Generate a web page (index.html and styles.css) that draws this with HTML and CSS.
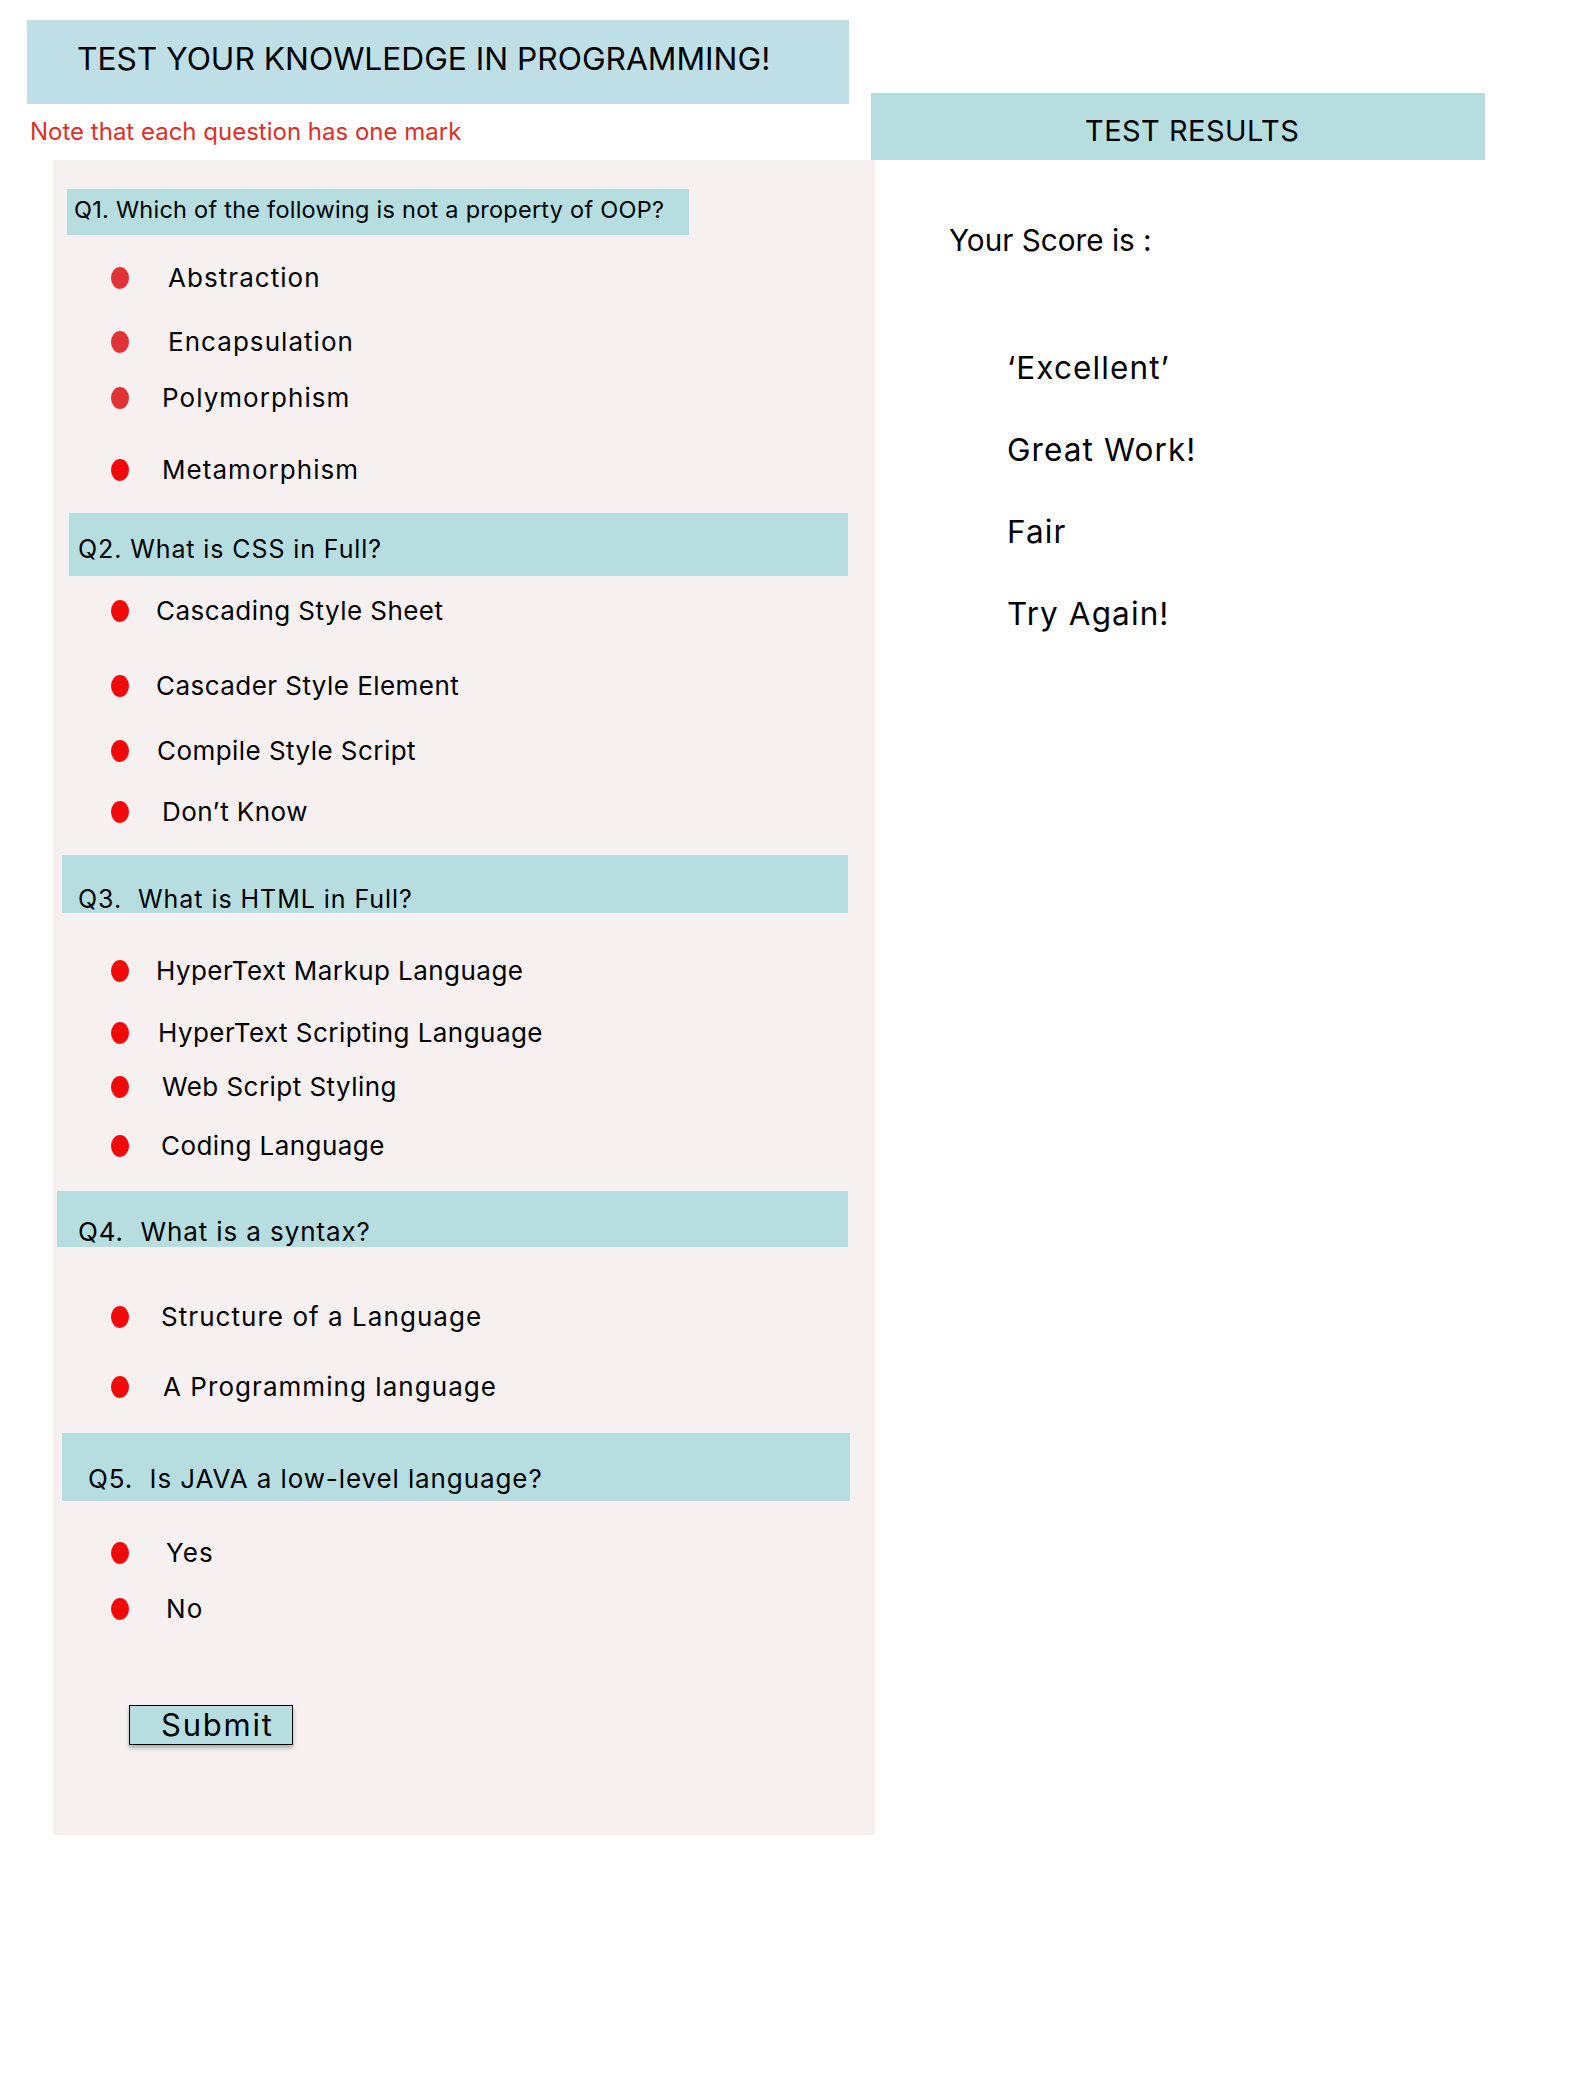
FILE: index.html
```html
<!DOCTYPE html>
<html lang="en">
<head>
<meta charset="utf-8">
<title>Programming Quiz</title>
<link rel="stylesheet" href="styles.css">
</head>
<body>
<div class="page">
  <div class="left">
    <h1 class="title">TEST YOUR KNOWLEDGE IN PROGRAMMING!</h1>
    <p class="note">Note that each question has one mark</p>
    <form class="panel">
      <div class="q q1">Q1. Which of the following is not a property of OOP?</div>
      <div class="opt wide r1"><span class="dot dot-soft"></span><span class="lbl g39">Abstraction</span></div>
      <div class="opt wide r2"><span class="dot dot-soft"></span><span class="lbl g39">Encapsulation</span></div>
      <div class="opt wide r3"><span class="dot dot-soft"></span><span class="lbl g33">Polymorphism</span></div>
      <div class="opt wide r4"><span class="dot"></span><span class="lbl g33">Metamorphism</span></div>

      <div class="q q2">Q2. What is CSS in Full?</div>
      <div class="opt r5"><span class="dot"></span><span class="lbl g27">Cascading Style Sheet</span></div>
      <div class="opt r6"><span class="dot"></span><span class="lbl g27">Cascader Style Element</span></div>
      <div class="opt r7"><span class="dot"></span><span class="lbl g28">Compile Style Script</span></div>
      <div class="opt r8"><span class="dot"></span><span class="lbl g33">Don’t Know</span></div>

      <div class="q q3">Q3.  What is HTML in Full?</div>
      <div class="opt r9"><span class="dot"></span><span class="lbl g27">HyperText Markup Language</span></div>
      <div class="opt r10"><span class="dot"></span><span class="lbl g29">HyperText Scripting Language</span></div>
      <div class="opt r11"><span class="dot"></span><span class="lbl g33">Web Script Styling</span></div>
      <div class="opt r12"><span class="dot"></span><span class="lbl g32">Coding Language</span></div>

      <div class="q q4">Q4.  What is a syntax?</div>
      <div class="opt wide r13"><span class="dot"></span><span class="lbl g32">Structure of a Language</span></div>
      <div class="opt wide r14"><span class="dot"></span><span class="lbl g34">A Programming language</span></div>

      <div class="q q5">Q5.  Is JAVA a low-level language?</div>
      <div class="opt wide r15"><span class="dot"></span><span class="lbl g37">Yes</span></div>
      <div class="opt wide r16"><span class="dot"></span><span class="lbl g37">No</span></div>

      <button type="button" class="submit">Submit</button>
    </form>
  </div>
  <div class="right">
    <h2 class="results-title">TEST RESULTS</h2>
    <p class="score">Your Score is :</p>
    <ul class="grades">
      <li>‘Excellent’</li>
      <li>Great Work!</li>
      <li>Fair</li>
      <li>Try Again!</li>
    </ul>
  </div>
</div>
</body>
</html>
```

FILE: styles.css
```css
* { box-sizing: border-box; }

html, body {
  margin: 0;
  padding: 0;
  background: #ffffff;
}

body {
  font-family: Inter, "Noto Sans", sans-serif;
  color: #000;
  width: 1581px;
  min-height: 2096px;
}

.page {
  display: flex;
  align-items: flex-start;
  padding: 20px 0 0 27px;
}

.left {
  flex: none;
  width: 822px;
}

.right {
  flex: none;
  width: 614px;
  margin-left: 22px;
  margin-top: 73px;
}

/* header */
.title {
  margin: 0;
  height: 84px;
  padding: 19px 0 0 50px;
  background: #bedfe5;
  font-size: 31.7px;
  font-weight: 400;
  line-height: 40px;
  white-space: nowrap;
}

.note {
  margin: 0;
  height: 56px;
  padding: 14px 0 0 3px;
  color: #d9302a;
  font-size: 24px;
  line-height: 28px;
}

/* quiz panel */
.panel {
  margin: 0 0 0 26px;
  width: 822px;
  background: #f6f0f0;
  padding: 0 0 90px 0;
  display: flex;
  flex-direction: column;
  align-items: flex-start;
}

.q {
  background: #b6dee0;
  font-size: 25px;
  line-height: 30px;
  letter-spacing: 0.9px;
  white-space: pre;
}

.q1 { margin: 29px 0 0 14px; width: 622px; height: 46px; padding: 0 0 0 7px; font-size: 23.5px; line-height: 41px; letter-spacing: 0.25px; }
.q2 { margin: 28px 0 0 16px; width: 779px; height: 63px; padding: 21px 0 0 9px; }
.q3 { margin: 28px 0 0 9px;  width: 786px; height: 58px; padding: 30px 0 0 16px; line-height: 28px; letter-spacing: 0.95px; }
.q4 { margin: 30px 0 0 4px;  width: 791px; height: 56px; padding: 27px 0 0 21px; line-height: 28px; font-size: 26px; letter-spacing: 0.9px; }
.q5 { margin: 31px 0 0 9px;  width: 788px; height: 68px; padding: 31px 0 0 26px; font-size: 26px; letter-spacing: 0.9px; }

.opt {
  display: flex;
  align-items: center;
  height: 30px;
  margin-left: 58px;
  font-size: 26px;
  line-height: 30px;
  letter-spacing: 0.45px;
  white-space: nowrap;
}

.opt.wide { letter-spacing: 1.05px; }

.dot {
  flex: none;
  width: 18px;
  height: 22px;
  border-radius: 50%;
  background: #f20a0a;
}

.dot-soft { background: #e03335; }

.g27 { margin-left: 27px; }
.g28 { margin-left: 28px; }
.g29 { margin-left: 29px; }
.g31 { margin-left: 31px; }
.g32 { margin-left: 32px; }
.g33 { margin-left: 33px; }
.g34 { margin-left: 34px; }
.g37 { margin-left: 37px; }
.g39 { margin-left: 39px; }

.r1  { margin-top: 28px; }
.r2  { margin-top: 34px; }
.r3  { margin-top: 26px; }
.r4  { margin-top: 42px; }
.r5  { margin-top: 20px; }
.r6  { margin-top: 45px; }
.r7  { margin-top: 35px; }
.r8  { margin-top: 31px; }
.r9  { margin-top: 43px; }
.r10 { margin-top: 32px; }
.r11 { margin-top: 24px; }
.r12 { margin-top: 29px; }
.r13 { margin-top: 55px; }
.r14 { margin-top: 40px; }
.r15 { margin-top: 37px; }
.r16 { margin-top: 26px; }

.submit {
  margin: 81px 0 0 76px;
  width: 164px;
  height: 40px;
  padding: 0 0 0 31px;
  border: 1px solid #000;
  border-radius: 0;
  background: #b6dee0;
  box-shadow: 0 3px 4px rgba(0, 0, 0, 0.28);
  font-family: Inter, "Noto Sans", sans-serif;
  font-size: 31px;
  line-height: 38px;
  letter-spacing: 1.8px;
  color: #000;
  text-align: left;
}

/* results */
.results-title {
  margin: 0;
  height: 67px;
  padding: 20px 0 0 214px;
  background: #b6dee0;
  font-size: 29px;
  font-weight: 400;
  line-height: 35px;
  letter-spacing: 0.45px;
  white-space: nowrap;
}

.score {
  margin: 62px 0 0 78px;
  font-size: 29.7px;
  line-height: 36px;
}

.grades {
  list-style: none;
  margin: 90px 0 0 136px;
  padding: 0;
  display: flex;
  flex-direction: column;
  gap: 42px;
}

.grades li {
  font-size: 31.5px;
  line-height: 40px;
  letter-spacing: 1.1px;
}
```
